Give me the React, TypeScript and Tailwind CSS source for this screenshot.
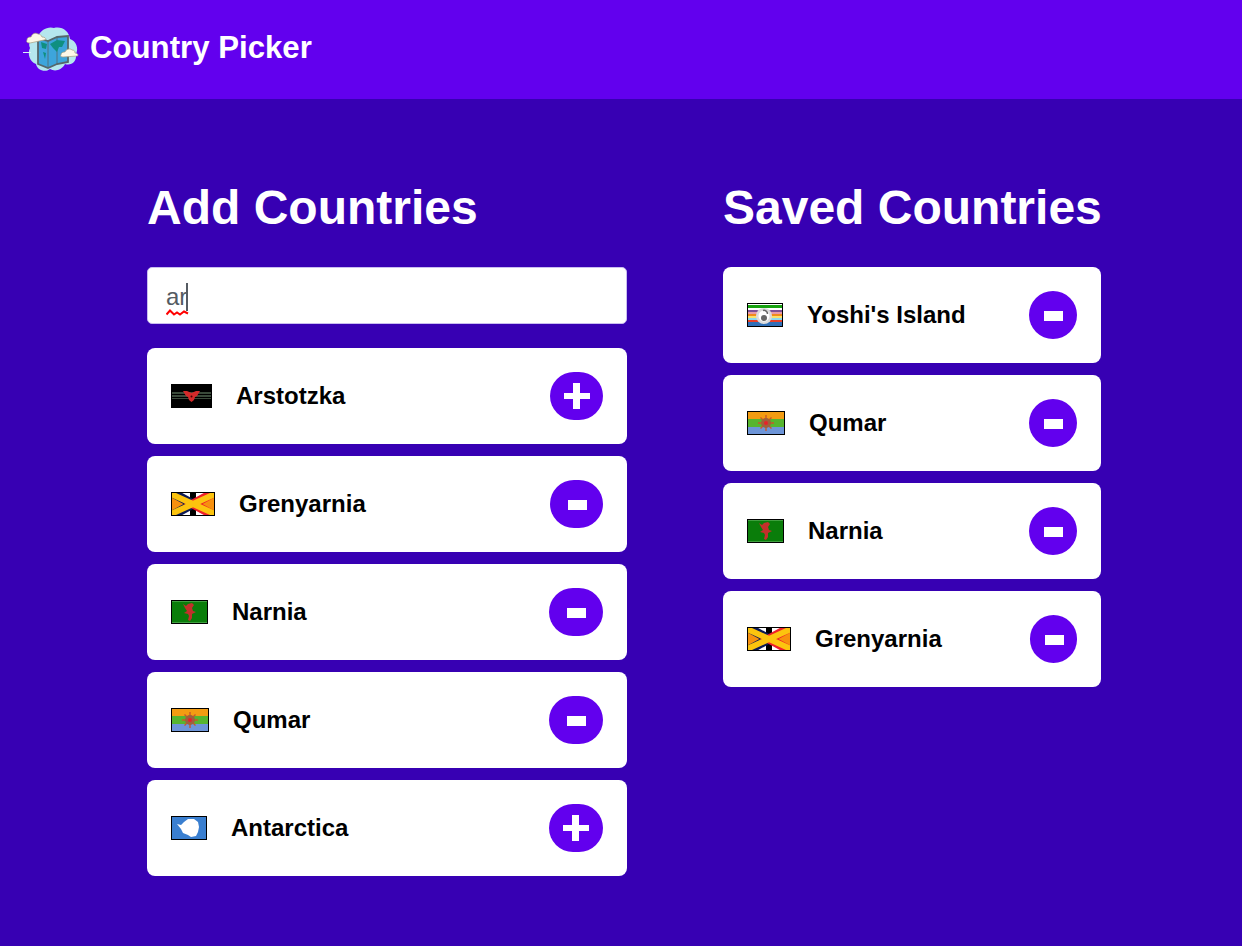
import { ReactNode } from 'react';

function Frame({ w, children }: { w: number; children: ReactNode }) {
  return (
    <svg width={w} height={24} viewBox={`0 0 ${w} 24`} className="shrink-0">
      {children}
      <rect x="0.5" y="0.5" width={w - 1} height="23" fill="none" stroke="#000" />
    </svg>
  );
}

function Arstotzka() {
  return (
    <svg width={41} height={24} viewBox="0 0 41 24" className="shrink-0">
      <rect width="41" height="24" fill="#000" />
      <rect x="1" y="8" width="39" height="2" fill="#3a4a3a" />
      <rect x="1" y="11" width="39" height="2" fill="#3a4a3a" />
      <rect x="1" y="14" width="39" height="1" fill="#3a4a3a" />
      <path d="M12 7 L16 7 L20.5 9 L25 7 L29 7 L26 12 L24 13 L23 16 L20.5 18 L18 16 L17 13 L15 12 Z" fill="#d42a2a" />
      <circle cx="20.5" cy="12.5" r="1" fill="#400" />
    </svg>
  );
}

function Grenyarnia() {
  return (
    <Frame w={44}>
      <rect width="44" height="24" fill="#fff" />
      <rect x="19" y="0" width="6" height="24" fill="#000" />
      <path d="M0 5 L16 12 L0 19 Z" fill="#f7900e" />
      <path d="M44 5 L28 12 L44 19 Z" fill="#f7900e" />
      <path d="M0 0 L22 12 L0 24" fill="none" stroke="#0c1a55" strokeWidth="9" />
      <path d="M44 0 L22 12 L44 24" fill="none" stroke="#ef1f2a" strokeWidth="9" />
      <path d="M0 2 L22 12 L0 22" fill="none" stroke="#fcc40e" strokeWidth="6" />
      <path d="M44 2 L22 12 L44 22" fill="none" stroke="#fcc40e" strokeWidth="6" />
    </Frame>
  );
}

function Narnia() {
  return (
    <Frame w={37}>
      <rect width="37" height="24" fill="#0a7d0a" />
      <rect x="1" y="1" width="35" height="1" fill="#3f9f3f" />
      <rect x="1" y="22" width="35" height="1" fill="#3f9f3f" />
      <path
        d="M12 4 L15 6 L17 4 L21 3 L23 5 L21 8 L22 11 L25 12 L21 14 L21 18 L19 21 L17 20 L18 16 L17 14 L13 13 L16 11 L14 8 Z"
        fill="#c4302b"
      />
    </Frame>
  );
}

function Qumar() {
  return (
    <Frame w={38}>
      <rect width="38" height="8" fill="#f39c12" />
      <rect y="8" width="38" height="8" fill="#57b52f" />
      <rect y="16" width="38" height="8" fill="#6d95d8" />
      <g stroke="#c9572b" strokeWidth="1.4">
        <path d="M19 4 V20 M11 12 H27 M13.5 6.5 L24.5 17.5 M24.5 6.5 L13.5 17.5" />
      </g>
      <circle cx="19" cy="12" r="5" fill="#a0603b" />
      <circle cx="19" cy="12" r="2" fill="#e8202a" />
    </Frame>
  );
}

function Antarctica() {
  return (
    <Frame w={36}>
      <rect width="36" height="24" fill="#3a7fd0" />
      <path
        d="M6 8 L10 9 L13 6 L17 3 L23 3 L27 6 L28 11 L27 16 L25 20 L20 21 L17 19 L12 17 L10 13 Z"
        fill="#fff"
      />
    </Frame>
  );
}

function Yoshi() {
  return (
    <Frame w={36}>
      <rect width="36" height="24" fill="#fff" />
      <rect y="2" width="36" height="3" fill="#17a30f" />
      <rect y="7" width="36" height="2" fill="#7d4f96" />
      <rect y="9" width="36" height="2" fill="#e79aa6" />
      <rect y="11" width="36" height="2" fill="#f28a1c" />
      <rect y="13" width="36" height="2" fill="#f7e26b" />
      <rect y="15" width="36" height="2" fill="#8ed8ee" />
      <rect y="17" width="36" height="2" fill="#e8402a" />
      <rect y="19" width="36" height="4" fill="#2f6fb8" />
      <circle cx="17" cy="13" r="8" fill="#dcdcdc" />
      <circle cx="17" cy="13" r="5.5" fill="#fff" />
      <circle cx="17" cy="15" r="3" fill="#666" />
      <path d="M16 7.5 A3.5 3.5 0 0 1 20.5 11" fill="none" stroke="#666" strokeWidth="1.5" />
    </Frame>
  );
}

function Logo() {
  return (
    <svg width={64} height={64} viewBox="0 0 64 64" className="shrink-0">
      <path
        d="M10 32 C7 26 13 20 18 21 C20 14 28 10 34 12 C42 10 49 15 50 23 C56 25 59 32 56 38 C57 46 51 50 45 48 C42 54 35 56 30 53 C25 57 17 54 16 48 C10 46 7 38 10 32 Z"
        fill="#b5e6ee"
      />
      <rect x="3" y="36" width="8" height="1" fill="#d8f2f6" />
      <path d="M18 22 L28 25 L37 21 L48 20 L48 46 L37 48 L28 52 L18 48 Z" fill="#3da5dc" stroke="#56676b" strokeWidth="1.8" />
      <path d="M28 25 V52 M37 21 V48" stroke="#56676b" strokeWidth="0.8" />
      <path d="M21 26 L27 28 L26 33 L22 32 Z M30 28 L37 24 L45 25 L42 31 L39 31 L37 36 L33 32 Z M23 36 L26 37 L25 43 Z M41 37 L45 36 L44 41 Z" fill="#0f8f80" />
      <path d="M7 24 C7 21 10 21 11 21 C12 18 15 16 18 18 C20 18 21 19 22 21 C26 21 27 24 24 24 L10 27 C7 27 6 26 7 24 Z" fill="#fdf8e8" stroke="#a89c7c" strokeWidth="0.7" />
      <path d="M41 39 C41 36 44 36 45 36 C46 33 50 32 52 34 C54 34 55 35 55 37 C58 37 59 40 57 40 L43 41 C41 41 40 40 41 39 Z" fill="#fdf8e8" stroke="#a89c7c" strokeWidth="0.7" />
    </svg>
  );
}

function ActionButton({ kind, widthClass }: { kind: 'add' | 'remove'; widthClass: string }) {
  return (
    <button className={`flex h-12 shrink-0 items-center justify-center rounded-full bg-[#6200ee] ${widthClass}`}>
      <svg width={26} height={28} viewBox="0 0 26 28">
        {kind === 'add' ? (
          <path d="M9 1 H16 V11 H26 V17 H16 V27 H9 V17 H0 V11 H9 Z" fill="#fff" />
        ) : (
          <rect x="4" y="10" width="19" height="10" fill="#fff" />
        )}
      </svg>
    </button>
  );
}

function CountryRow({
  flag,
  name,
  kind,
  widthClass,
}: {
  flag: ReactNode;
  name: string;
  kind: 'add' | 'remove';
  widthClass: string;
}) {
  return (
    <li className="flex h-24 items-center rounded-lg bg-white p-6">
      {flag}
      <span className="ml-6 flex-1 text-2xl font-bold text-black">{name}</span>
      <ActionButton kind={kind} widthClass={widthClass} />
    </li>
  );
}

export default function App() {
  return (
    <div className="min-h-screen bg-[#3700b3] font-['Liberation_Sans',Arial,sans-serif]">
      <header className="flex h-[99px] items-center gap-[6px] bg-[#6200ee] pb-[3px] pl-5">
        <Logo />
        <h1 className="text-[31.2px] font-bold text-white">Country Picker</h1>
      </header>

      <main className="flex gap-24 pl-[147px] pt-[81px]">
        <section className="w-[480px]">
          <h2 className="mb-8 text-5xl leading-[55px] font-bold whitespace-nowrap text-white">Add Countries</h2>
          <div className="relative mb-6 flex h-[57px] items-center rounded-[5px] border border-[#c9bdf0] bg-white pl-[18px] pt-[2px] text-2xl text-[#555b62]">
            <span className="relative">
              ar
              <svg width={23} height={7} viewBox="0 0 23 7" className="absolute -bottom-[3px] left-0">
                <path d="M0.5 5.5 L4 1.5 L8 5.5 L11 3.5 L14 5.5 L18 2.5 L22 4.5" fill="none" stroke="#ff0000" strokeWidth="2" />
              </svg>
            </span>
            <span className="ml-[-1px] h-[28px] w-[2px] bg-[#555b62]" />
          </div>
          <ul className="flex flex-col gap-3">
            <CountryRow flag={<Arstotzka />} name="Arstotzka" kind="add" widthClass="w-[53px]" />
            <CountryRow flag={<Grenyarnia />} name="Grenyarnia" kind="remove" widthClass="w-[53px]" />
            <CountryRow flag={<Narnia />} name="Narnia" kind="remove" widthClass="w-[54px]" />
            <CountryRow flag={<Qumar />} name="Qumar" kind="remove" widthClass="w-[54px]" />
            <CountryRow flag={<Antarctica />} name="Antarctica" kind="add" widthClass="w-[54px]" />
          </ul>
        </section>

        <section className="w-[378px]">
          <h2 className="mb-8 text-5xl leading-[55px] font-bold whitespace-nowrap text-white">Saved Countries</h2>
          <ul className="flex flex-col gap-3">
            <CountryRow flag={<Yoshi />} name="Yoshi's Island" kind="remove" widthClass="w-12" />
            <CountryRow flag={<Qumar />} name="Qumar" kind="remove" widthClass="w-12" />
            <CountryRow flag={<Narnia />} name="Narnia" kind="remove" widthClass="w-12" />
            <CountryRow flag={<Grenyarnia />} name="Grenyarnia" kind="remove" widthClass="w-[47px]" />
          </ul>
        </section>
      </main>
    </div>
  );
}
